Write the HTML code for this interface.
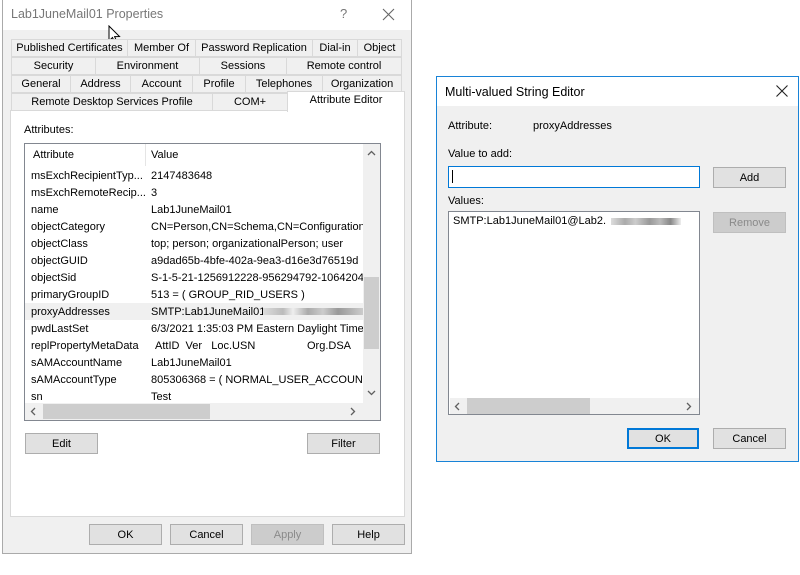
<!DOCTYPE html><html><head><style>
*{box-sizing:border-box;margin:0;padding:0}
body{width:800px;height:575px;background:#fff;font-family:"Liberation Sans",sans-serif;font-size:11px;color:#000;position:relative;overflow:hidden}
div,span{position:absolute;white-space:nowrap}
.tab{background:#f0f0f0;border:1px solid #d9d9d9;text-align:center;line-height:17px;height:18px}
.btn{background:#e1e1e1;border:1px solid #adadad;text-align:center;line-height:20px;height:21px}
.row{left:0;width:338px;height:17px;line-height:18px;overflow:hidden}
.row span{top:0}
</style></head><body>
<!-- main dialog -->
<div style="left:2px;top:0;width:410px;height:554px;border:1px solid #aaa;background:#f0f0f0"></div>
<div style="left:3px;top:0;width:408px;height:30px;background:#fff"></div>
<div style="left:11px;top:7px;font-size:12.5px;color:#777">Lab1JuneMail01 Properties</div>
<div style="left:340px;top:6px;font-size:13px;color:#777">?</div>
<svg style="position:absolute;left:382px;top:8px" width="13" height="13"><path d="M1 1L12 12M12 1L1 12" stroke="#666" stroke-width="1.1"/></svg>
<svg style="position:absolute;left:108px;top:25px" width="14" height="20"><path d="M1 1L1 16L4.5 12.5L7 18L9 17L6.6 11.6L11.5 11.5Z" fill="#fff" stroke="#000" stroke-width="1"/></svg>
<!-- tabs -->
<div class="tab" style="left:11px;top:39px;width:117px">Published Certificates</div>
<div class="tab" style="left:127px;top:39px;width:69px">Member Of</div>
<div class="tab" style="left:195px;top:39px;width:118px">Password Replication</div>
<div class="tab" style="left:312px;top:39px;width:46px">Dial-in</div>
<div class="tab" style="left:357px;top:39px;width:45px">Object</div>
<div class="tab" style="left:11px;top:57px;width:85px">Security</div>
<div class="tab" style="left:95px;top:57px;width:105px">Environment</div>
<div class="tab" style="left:199px;top:57px;width:88px">Sessions</div>
<div class="tab" style="left:286px;top:57px;width:116px">Remote control</div>
<div class="tab" style="left:11px;top:75px;width:60px">General</div>
<div class="tab" style="left:70px;top:75px;width:61px">Address</div>
<div class="tab" style="left:130px;top:75px;width:63px">Account</div>
<div class="tab" style="left:192px;top:75px;width:54px">Profile</div>
<div class="tab" style="left:245px;top:75px;width:78px">Telephones</div>
<div class="tab" style="left:322px;top:75px;width:80px">Organization</div>
<div class="tab" style="left:11px;top:93px;width:202px">Remote Desktop Services Profile</div>
<div class="tab" style="left:212px;top:93px;width:76px">COM+</div>
<!-- panel -->
<div style="left:10px;top:110px;width:395px;height:407px;background:#fff;border:1px solid #d9d9d9"></div>
<div class="tab" style="left:287px;top:91px;width:118px;height:21px;background:#fff;border-bottom:none;line-height:16px">Attribute Editor</div>
<div style="left:24px;top:124px">Attributes:</div>
<!-- list -->
<div style="left:24px;top:143px;width:357px;height:278px;border:1px solid #828790;background:#fff;overflow:hidden">
 <div style="left:0;top:0;width:340px;height:22px;line-height:22px">
  <span style="left:8px">Attribute</span><span style="left:120px;top:0;width:1px;height:22px;background:#e5e5e5"></span><span style="left:126px">Value</span>
 </div>
 <div style="left:0;top:23px;width:338px;height:236px;overflow:hidden">
  <div class="row" style="top:0"><span style="left:6px">msExchRecipientTyp...</span><span style="left:126px">2147483648</span></div>
  <div class="row" style="top:17px"><span style="left:6px">msExchRemoteRecip...</span><span style="left:126px">3</span></div>
  <div class="row" style="top:34px"><span style="left:6px">name</span><span style="left:126px">Lab1JuneMail01</span></div>
  <div class="row" style="top:51px"><span style="left:6px">objectCategory</span><span style="left:126px">CN=Person,CN=Schema,CN=Configuration,DC</span></div>
  <div class="row" style="top:68px"><span style="left:6px">objectClass</span><span style="left:126px">top; person; organizationalPerson; user</span></div>
  <div class="row" style="top:85px"><span style="left:6px">objectGUID</span><span style="left:126px">a9dad65b-4bfe-402a-9ea3-d16e3d76519d</span></div>
  <div class="row" style="top:102px"><span style="left:6px">objectSid</span><span style="left:126px">S-1-5-21-1256912228-956294792-10642046</span></div>
  <div class="row" style="top:119px"><span style="left:6px">primaryGroupID</span><span style="left:126px">513 = ( GROUP_RID_USERS )</span></div>
  <div class="row" style="top:136px;background:#f0f0f0"><span style="left:6px">proxyAddresses</span><span style="left:126px">SMTP:Lab1JuneMail01</span><span style="left:238px;top:5px;width:100px;height:7px;background:linear-gradient(90deg,#ddd,#bbb 20%,#eee 30%,#aaa 45%,#ccc 60%,#999 75%,#ccc)"></span></div>
  <div class="row" style="top:153px"><span style="left:6px">pwdLastSet</span><span style="left:126px">6/3/2021 1:35:03 PM Eastern Daylight Time</span></div>
  <div class="row" style="top:170px"><span style="left:6px">replPropertyMetaData</span><span style="left:130px">AttID&nbsp; Ver&nbsp;&nbsp; Loc.USN</span><span style="left:282px">Org.DSA</span></div>
  <div class="row" style="top:187px"><span style="left:6px">sAMAccountName</span><span style="left:126px">Lab1JuneMail01</span></div>
  <div class="row" style="top:204px"><span style="left:6px">sAMAccountType</span><span style="left:126px">805306368 = ( NORMAL_USER_ACCOUNT</span></div>
  <div class="row" style="top:221px"><span style="left:6px">sn</span><span style="left:126px">Test</span></div>
 </div>
 <div style="left:338px;top:0;width:17px;height:259px;background:#f0f0f0"></div>
 <div style="left:339px;top:133px;width:15px;height:72px;background:#cdcdcd"></div>
 <svg style="position:absolute;left:342px;top:6px" width="9" height="6"><path d="M1 5L4.5 1.5L8 5" stroke="#606060" stroke-width="1.3" fill="none"/></svg>
 <svg style="position:absolute;left:342px;top:246px" width="9" height="6"><path d="M1 1L4.5 4.5L8 1" stroke="#606060" stroke-width="1.3" fill="none"/></svg>
 <div style="left:0;top:259px;width:338px;height:17px;background:#f0f0f0"></div>
 <div style="left:18px;top:260px;width:167px;height:15px;background:#cdcdcd"></div>
 <svg style="position:absolute;left:5px;top:263px" width="6" height="9"><path d="M5 1L1.5 4.5L5 8" stroke="#606060" stroke-width="1.3" fill="none"/></svg>
 <svg style="position:absolute;left:325px;top:263px" width="6" height="9"><path d="M1 1L4.5 4.5L1 8" stroke="#606060" stroke-width="1.3" fill="none"/></svg>
 <div style="left:338px;top:259px;width:17px;height:17px;background:#f0f0f0"></div>
</div>
<div class="btn" style="left:25px;top:433px;width:73px">Edit</div>
<div class="btn" style="left:307px;top:433px;width:73px">Filter</div>
<div class="btn" style="left:89px;top:524px;width:73px">OK</div>
<div class="btn" style="left:170px;top:524px;width:73px">Cancel</div>
<div class="btn" style="left:251px;top:524px;width:73px;background:#ccc;border-color:#bfbfbf;color:#8a8a8a">Apply</div>
<div class="btn" style="left:332px;top:524px;width:73px">Help</div>

<!-- second dialog -->
<div style="left:436px;top:76px;width:363px;height:386px;border:1px solid #1883d7;background:#f0f0f0"></div>
<div style="left:437px;top:77px;width:361px;height:29px;background:#fff"></div>
<div style="left:445px;top:85px;font-size:12.5px">Multi-valued String Editor</div>
<svg style="position:absolute;left:776px;top:85px" width="12" height="12"><path d="M0.5 0.5L11.5 11.5M11.5 0.5L0.5 11.5" stroke="#222" stroke-width="1.1"/></svg>
<div style="left:448px;top:120px">Attribute:</div>
<div style="left:533px;top:120px">proxyAddresses</div>
<div style="left:448px;top:148px">Value to add:</div>
<div style="left:448px;top:166px;width:252px;height:22px;border:1px solid #0078d7;background:#fff"></div>
<div style="left:452px;top:170px;width:1px;height:13px;background:#000"></div>
<div class="btn" style="left:713px;top:167px;width:73px">Add</div>
<div style="left:448px;top:195px">Values:</div>
<div style="left:448px;top:211px;width:252px;height:204px;border:1px solid #828790;background:#fff;overflow:hidden">
 <div style="left:4px;top:3px">SMTP:Lab1JuneMail01@Lab2.</div>
 <div style="left:162px;top:6px;width:70px;height:7px;background:linear-gradient(90deg,#ddd,#aaa 20%,#ccc 35%,#999 55%,#bbb 70%,#888 85%,#eee)"></div>
 <div style="left:1px;top:186px;width:249px;height:16px;background:#f0f0f0"></div>
 <div style="left:18px;top:186px;width:123px;height:16px;background:#cdcdcd"></div>
 <svg style="position:absolute;left:5px;top:190px" width="6" height="9"><path d="M5 1L1.5 4.5L5 8" stroke="#606060" stroke-width="1.3" fill="none"/></svg>
 <svg style="position:absolute;left:237px;top:190px" width="6" height="9"><path d="M1 1L4.5 4.5L1 8" stroke="#606060" stroke-width="1.3" fill="none"/></svg>
</div>
<div class="btn" style="left:713px;top:212px;width:73px;background:#ccc;border-color:#bfbfbf;color:#8a8a8a">Remove</div>
<div class="btn" style="left:627px;top:428px;width:72px;border:2px solid #0078d7;line-height:18px">OK</div>
<div class="btn" style="left:713px;top:428px;width:73px">Cancel</div>
</body></html>
